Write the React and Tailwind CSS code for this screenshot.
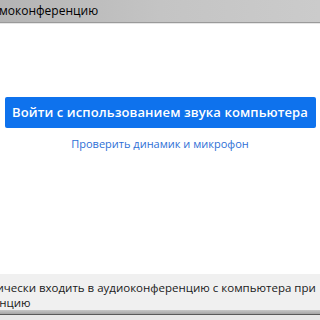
import React from 'react';

export default function App() {
  return (
    <div
      className="w-[320px] h-[320px] overflow-hidden bg-white flex flex-col"
      style={{ fontFamily: '"Open Sans", "Noto Sans", sans-serif' }}
    >
      <div className="h-[23px] shrink-0 flex items-center bg-gradient-to-r from-[#b4b4b4] via-[#c4c4c4] to-[#cbcbcb] border-b border-[#9a9a9a]">
        <span className="text-[12px] text-black -ml-[1px] leading-none">моконференцию</span>
      </div>
      <div className="h-px bg-[#e6e6e6]" />

      <div className="flex-1 flex flex-col items-center pt-[73px]">
        <button className="w-[311px] h-[31px] bg-[#0e72ed] rounded-[2px] text-white font-semibold text-[13px] tracking-[0.1px]">
          Войти с использованием звука компьютера
        </button>
        <a className="mt-[8px] text-[11px] text-[#2d6fd6]">Проверить динамик и микрофон</a>
      </div>

      <div className="h-[36px] shrink-0 bg-[#f0f0f0] overflow-hidden pt-[6px] text-[11.5px] leading-[15px] text-[#1a1a1a] whitespace-nowrap">
        <div className="-ml-[50px]">Автоматически входить в аудиоконференцию с компьютера при</div>
        <div className="-ml-[49px]">конференцию</div>
      </div>
      <div className="h-[4px] shrink-0 bg-gradient-to-b from-[#c8c8c8] to-[#a6a6a6]" />
      <div className="h-px shrink-0 bg-[#5a5a5a]" />
      <div className="h-[5px] shrink-0 bg-[#e8e8e8]" />
    </div>
  );
}
